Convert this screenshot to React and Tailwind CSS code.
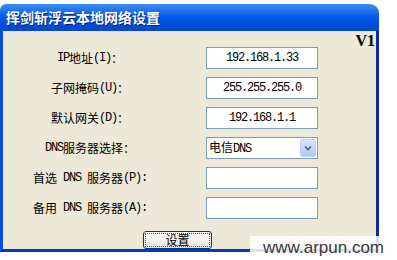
import React from "react";

const fields = [
  { label: "IP地址(I)：", value: "192.168.1.33" },
  { label: "子网掩码(U)：", value: "255.255.255.0" },
  { label: "默认网关(D)：", value: "192.168.1.1" },
  { label: "DNS服务器选择：", value: "电信DNS", select: true },
  { label: "首选 DNS 服务器(P):", value: "" },
  { label: "备用 DNS 服务器(A):", value: "" },
];

const cjk = { fontFamily: '"Noto Sans CJK SC", "Liberation Sans", sans-serif' };
const mono = { fontFamily: '"Liberation Mono", "Noto Sans CJK SC", monospace' };

// half-width runs get a 6px-per-char mono look, like SimSun
const Mixed = ({ text }) =>
  text.split(/([\x20-\x7e]+)/).map((part, i) =>
    /^[\x20-\x7e]+$/.test(part) ? (
      <span key={i} className="whitespace-pre tracking-[-1.2px]" style={mono}>
        {part}
      </span>
    ) : (
      <span key={i}>{part}</span>
    )
  );

const Field = ({ label, value, select }) => (
  <>
    <div className="flex items-center justify-center text-[12px] text-black whitespace-nowrap" style={cjk}>
      <Mixed text={label} />
    </div>
    {select ? (
      <div className="flex h-[22px] items-center justify-between border border-[#7f9db9] bg-white pl-[2px] pr-[1px]">
        <span className="text-[12px] leading-none text-black" style={cjk}>
          <Mixed text={value} />
        </span>
        <div className="flex h-[18px] w-[16px] items-center justify-center rounded-[2px] border border-[#bcd0f7] bg-gradient-to-b from-[#d9e5fd] to-[#b3c7f5]">
          <svg width="8" height="6" viewBox="0 0 8 6">
            <path d="M1 1.5 L4 4.5 L7 1.5" fill="none" stroke="#4d6185" strokeWidth="1.6" />
          </svg>
        </div>
      </div>
    ) : (
      <div
        className="flex h-[22px] items-center justify-center border border-[#7f9db9] bg-white text-[12px] tracking-[-1.2px] text-black"
        style={mono}
      >
        {value}
      </div>
    )}
  </>
);

export default function App() {
  return (
    <div className="relative h-[260px] w-[397px] overflow-hidden bg-white">
      <div className="mt-[4px] w-[379px]">
        {/* title bar */}
        <div className="flex h-[27px] items-center rounded-tl-[6px] rounded-tr-[9px] bg-gradient-to-b from-[#3b8cf5] via-[#0058e6] to-[#0047d0] pl-[6px]">
          <span
            className="text-[14px] font-bold text-white [text-shadow:1px_1px_0_#0a1e6e]"
            style={cjk}
          >
            挥剑斩浮云本地网络设置
          </span>
        </div>
        {/* body */}
        <div className="h-[221px] border-x-[3px] border-b-[3px] border-l-[#0a4ee0] border-r-[#0c2a9a] border-b-[#0a34c8] bg-[#ece9d8]">
          <div className="flex h-[16px] justify-end pr-[1px] pt-[2px]">
            <span className="text-[16px] font-bold leading-[15px] text-black" style={{ fontFamily: '"Liberation Serif", serif' }}>
              V1
            </span>
          </div>
          <div className="grid grid-cols-[174px_112px] gap-x-[29px] gap-y-[8px]">
            {fields.map((f) => (
              <Field key={f.label} {...f} />
            ))}
          </div>
          <button
            className="ml-[140px] mt-[12px] flex h-[18px] w-[69px] items-center justify-center rounded-[3px] border border-[#003c74] bg-gradient-to-b from-white to-[#e6e3d6] p-[1px]"
          >
            <span
              className="flex h-full w-full items-center justify-center border border-dotted border-[#555] text-[12px] leading-none text-black"
              style={cjk}
            >
              设置
            </span>
          </button>
        </div>
      </div>
      {/* watermark */}
      <div className="absolute left-[250px] top-[236px] flex h-[22px] w-[136px] items-center justify-end bg-white/85 pr-[2px]">
        <span className="text-[17px] leading-none text-[#3a3a3a]" style={{ fontFamily: '"Liberation Sans", Arial, sans-serif' }}>
          www.arpun.com
        </span>
      </div>
    </div>
  );
}
